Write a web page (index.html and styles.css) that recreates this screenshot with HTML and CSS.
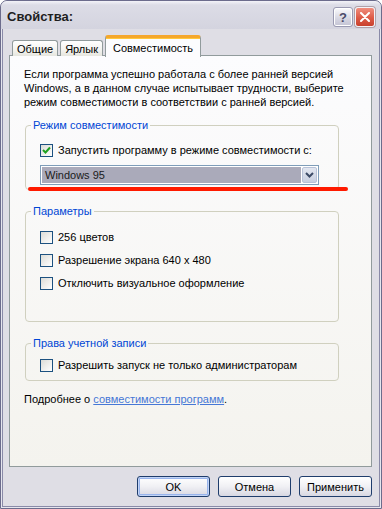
FILE: index.html
```html
<!DOCTYPE html>
<html lang="ru">
<head>
    <meta charset="UTF-8">
    <meta name="viewport" content="width=device-width, initial-scale=1.0">
    <title>Свойства</title>
    <link rel="stylesheet" href="styles.css">
</head>
<body>
    <div class="window">
        <div class="titlebar">
            <span class="title">Свойства:</span>
            <div class="caption-buttons">
                <div class="cap-btn help">?</div>
                <div class="cap-btn close">
                    <svg width="10" height="10" viewBox="0 0 10 10"><path d="M1 1 L9 9 M9 1 L1 9" stroke="#fff" stroke-width="2" stroke-linecap="round"/></svg>
                </div>
            </div>
        </div>

        <div class="client">
            <div class="tabs">
                <div class="tab">Общие</div>
                <div class="tab">Ярлык</div>
                <div class="tab active">Совместимость</div>
            </div>

            <div class="panel">
                <p class="intro">Если программа успешно работала с более ранней версией<br>Windows, а в данном случае испытывает трудности, выберите<br>режим совместимости в соответствии с ранней версией.</p>

                <fieldset class="group group-mode">
                    <legend>Режим совместимости</legend>
                    <div class="check-row">
                        <span class="checkbox">
                            <svg width="11" height="11" viewBox="0 0 11 11"><polyline points="2,5 4.5,7.5 9,2.5" fill="none" stroke="#21a121" stroke-width="2"/></svg>
                        </span>
                        <span>Запустить программу в режиме совместимости с:</span>
                    </div>
                    <div class="combo">
                        <div class="combo-value">Windows 95</div>
                        <div class="combo-btn">
                            <svg width="9" height="6" viewBox="0 0 9 6"><polyline points="1,1 4.5,4.5 8,1" fill="none" stroke="#3c4a66" stroke-width="2"/></svg>
                        </div>
                    </div>
                </fieldset>

                <fieldset class="group group-params">
                    <legend>Параметры</legend>
                    <div class="check-row"><span class="checkbox"></span><span>256 цветов</span></div>
                    <div class="check-row"><span class="checkbox"></span><span>Разрешение экрана 640 x 480</span></div>
                    <div class="check-row"><span class="checkbox"></span><span>Отключить визуальное оформление</span></div>
                </fieldset>

                <fieldset class="group group-account">
                    <legend>Права учетной записи</legend>
                    <div class="check-row"><span class="checkbox"></span><span>Разрешить запуск не только администраторам</span></div>
                </fieldset>

                <p class="more">Подробнее о <a href="#">совместимости программ</a>.</p>
            </div>

            <div class="actions">
                <button class="btn default">OK</button>
                <button class="btn">Отмена</button>
                <button class="btn">Применить</button>
            </div>
        </div>

        <!-- red annotation stroke drawn over the dialog -->
        <div class="marker"></div>
    </div>
</body>
</html>
```

FILE: styles.css
```css
body {
    margin: 0;
    padding: 0;
    background-color: #ffffff;
    font-family: "Liberation Sans", Arial, sans-serif;
    font-size: 11px;
    color: #000;
}

.window {
    position: relative;
    width: 382px;
    height: 509px;
    box-sizing: border-box;
    border: 1px solid #6c6c8c;
    border-radius: 7px 7px 0 0;
    background-color: #e6e6ee;
    display: flex;
    flex-direction: column;
    overflow: hidden;
}

/* title bar */
.titlebar {
    height: 28px;
    flex: none;
    display: flex;
    justify-content: space-between;
    align-items: flex-start;
    background: linear-gradient(#f3f3f8 0, #dcdce6 4px, #d4d4df 100%);
    border-radius: 6px 6px 0 0;
}

.title {
    font-weight: bold;
    font-size: 13px;
    color: #1e1e1e;
    padding: 8px 0 0 6px;
}

.caption-buttons {
    display: flex;
    gap: 2px;
    padding: 6px 6px 0 0;
}

.cap-btn {
    width: 20px;
    height: 20px;
    box-sizing: border-box;
    border-radius: 3px;
    display: flex;
    align-items: center;
    justify-content: center;
}

.help {
    border: 1px solid #9a9ab2;
    background: linear-gradient(#fbfbfd, #d6d6e2 60%, #c4c4d4);
    box-shadow: inset 0 0 0 1px #ffffff;
    color: #4a4a68;
    font-weight: bold;
    font-size: 13px;
}

.close {
    border: 1px solid #f3f3f8;
    background: linear-gradient(#f08e7e, #dd5a46 55%, #c8412e);
    box-shadow: 0 0 0 1px #b0a0a8;
}

/* client area */
.client {
    flex: 1;
    margin: 0 1px 1px 1px;
    border: 1px solid #8a8aa8;
    border-top: none;
    background-color: #dfdee5;
    padding: 7px 7px 0 6px;
    display: flex;
    flex-direction: column;
}

.tabs {
    display: flex;
    align-items: flex-end;
    padding-left: 3px;
    height: 20px;
    gap: 2px;
    position: relative;
    z-index: 1;
    margin-bottom: -1px;
}

.tab {
    height: 16px;
    box-sizing: border-box;
    padding: 1px 4px 0 4px;
    border: 1px solid #919b9c;
    border-bottom: none;
    border-radius: 3px 3px 0 0;
    background: linear-gradient(#ffffff, #f3f3ef 60%, #e6e6df);
    line-height: 14px;
}

.tab.active {
    height: 22px;
    margin-bottom: -1px;
    padding: 3px 7px 0 7px;
    border-top: 3px solid #f5a72c;
    background: #fcfcfe;
    box-shadow: inset 0 1px 0 #ffc83c;
}

.panel {
    height: 412px;
    box-sizing: border-box;
    border: 1px solid #919b9c;
    background: linear-gradient(#fcfcfe, #f4f3ee);
    padding: 11px 14px 0 14px;
}

.intro {
    margin: 0;
    line-height: 14px;
    white-space: nowrap;
}

/* group boxes */
.group {
    width: 314px;
    box-sizing: border-box;
    margin: 0 0 0 1px;
    padding: 0 0 0 14px;
    border: 1px solid #d0d0bf;
    border-radius: 4px;
}

.group legend {
    color: #0046d5;
    line-height: 12px;
    padding: 0 2px;
    margin-left: -9px;
}

.group-mode {
    margin-top: 10px;
    padding-top: 12px;
    padding-bottom: 4px;
}

.group-params {
    margin-top: 15px;
    padding-top: 13px;
    padding-bottom: 31px;
}

.group-params .check-row + .check-row {
    margin-top: 9px;
}

.group-account {
    margin-top: 15px;
    padding-top: 9px;
    padding-bottom: 8px;
}

.check-row {
    display: flex;
    align-items: center;
    gap: 5px;
    line-height: 14px;
}

.checkbox {
    width: 13px;
    height: 13px;
    box-sizing: border-box;
    border: 1px solid #1c5180;
    background: linear-gradient(135deg, #dcdcd7, #ffffff);
    display: flex;
    align-items: center;
    justify-content: center;
}

/* combo box */
.combo {
    width: 279px;
    height: 20px;
    box-sizing: border-box;
    margin-top: 8px;
    border: 1px solid #7f9db9;
    background-color: #fff;
    display: flex;
    padding: 1px;
    gap: 1px;
}

.combo-value {
    flex: 1;
    background-color: #aaaaba;
    color: #1a1a1a;
    padding-left: 3px;
    line-height: 16px;
}

.combo-btn {
    width: 15px;
    box-sizing: border-box;
    border: 1px solid #b8c2d8;
    border-radius: 2px;
    background: linear-gradient(#e2e6f0, #c8cfe0);
    display: flex;
    align-items: center;
    justify-content: center;
}

.more {
    margin: 11px 0 0 0;
    line-height: 14px;
}

.more a {
    color: #4677d6;
}

/* dialog buttons */
.actions {
    display: flex;
    justify-content: flex-end;
    gap: 8px;
    margin-top: 9px;
    padding-right: 0;
}

.btn {
    width: 73px;
    height: 21px;
    box-sizing: border-box;
    border: 1px solid #1f3d6c;
    border-radius: 3px;
    background: linear-gradient(#ffffff, #f0f0f4 50%, #d8d8e2);
    font-family: "Liberation Sans", Arial, sans-serif;
    font-size: 11px;
    color: #000;
    padding: 0;
}

.btn.default {
    box-shadow: inset 0 0 0 1px #c2d4f6, inset 0 0 0 2px #98b4ec;
}

.marker {
    position: absolute;
    left: 27px;
    top: 186px;
    width: 320px;
    height: 4px;
    border-radius: 2px;
    background-color: #ff1a00;
}
```
